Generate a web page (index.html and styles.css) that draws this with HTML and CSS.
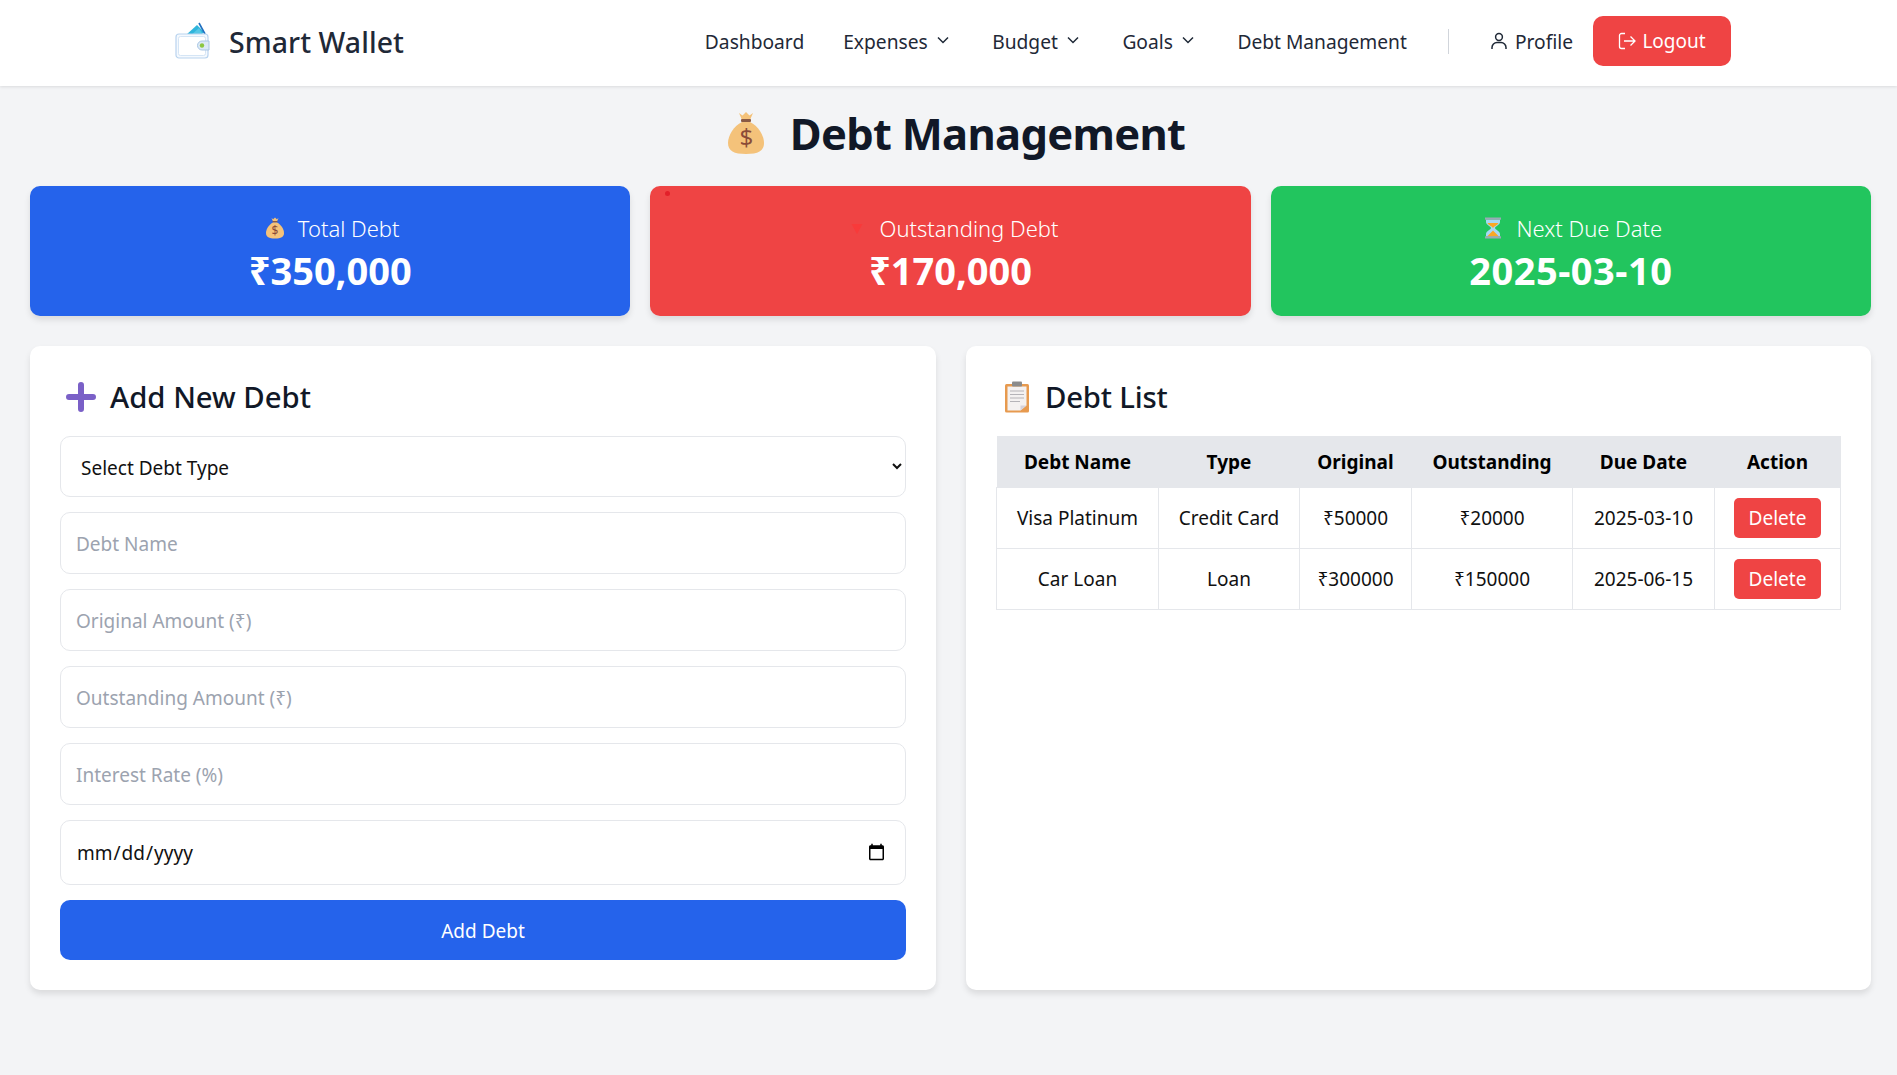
FILE: index.html
```html
<!DOCTYPE html>
<html lang="en">
<head>
<meta charset="utf-8">
<title>Smart Wallet - Debt Management</title>
<link rel="stylesheet" href="styles.css">
</head>
<body>
<nav class="navbar">
  <a class="brand" href="#">
    <svg class="brand-icon" viewBox="0 0 36 38">
      <path d="M11 13 L22 3 L29 10 L24 15Z" fill="#2fb5dc"/>
      <path d="M15 14 L24 6 L28 13Z" fill="#57c7e6"/>
      <path d="M24 1 L30 12" stroke="#1f6fc0" stroke-width="1.6"/>
      <rect x="1" y="12" width="32" height="24" rx="3" fill="#f4f9fe" stroke="#b9d3ee" stroke-width="1.2"/>
      <rect x="3.5" y="14.5" width="27" height="19" rx="2" fill="#fff" stroke="#d5e5f5" stroke-width="1"/>
      <path d="M34 19h-7a4.5 4.5 0 0 0 0 9h7z" fill="#dce9f6" stroke="#a9c6e4" stroke-width="1"/>
      <circle cx="27" cy="23.500" r="2.200" fill="#8cc63f"/>
    </svg>
    <span class="brand-name">Smart Wallet</span>
  </a>
  <div class="nav-links">
    <a class="nav-link nav-first" href="#">Dashboard</a>
    <a class="nav-link" href="#">Expenses<svg class="chev" viewBox="0 0 14 8"><path d="M2 1.500 7 6.500 12 1.500"/></svg></a>
    <a class="nav-link" href="#">Budget<svg class="chev" viewBox="0 0 14 8"><path d="M2 1.500 7 6.500 12 1.500"/></svg></a>
    <a class="nav-link" href="#">Goals<svg class="chev" viewBox="0 0 14 8"><path d="M2 1.500 7 6.500 12 1.500"/></svg></a>
    <a class="nav-link nav-last" href="#">Debt Management</a>
    <span class="nav-divider"></span>
    <a class="nav-link profile" href="#"><svg class="user-icon" viewBox="0 0 16 18"><circle cx="8" cy="5" r="3.400"/><path d="M1 17v-1.500a5 5 0 0 1 5-5h4a5 5 0 0 1 5 5V17"/></svg>Profile</a>
    <a class="logout" href="#"><svg class="logout-icon" viewBox="0 0 18 18"><path d="M7 1.500H3.500a2 2 0 0 0-2 2v11a2 2 0 0 0 2 2H7"/><path d="M6 9h11M12.500 4.500 17 9l-4.500 4.500"/></svg>Logout</a>
  </div>
</nav>

<main class="page">
  <h1 class="page-title">
    <svg class="title-bag" viewBox="0 0 38 44"><use href="#bag"/></svg>
    <span>Debt Management</span>
  </h1>

  <section class="stats">
    <div class="stat stat-blue">
      <div class="stat-label"><svg class="stat-icon" viewBox="0 0 38 44"><use href="#bag"/></svg>Total Debt</div>
      <div class="stat-value">₹350,000</div>
    </div>
    <div class="stat stat-red">
      <span class="red-dot"></span>
      <div class="stat-label"><svg class="stat-icon" viewBox="0 0 20 22"><path d="M4.500 7h11L10 17z" fill="#f83a3a"/></svg>Outstanding Debt</div>
      <div class="stat-value">₹170,000</div>
    </div>
    <div class="stat stat-green">
      <div class="stat-label"><svg class="stat-icon" viewBox="0 0 20 22">
        <path d="M3 2.500h14v2.500c0 3-5 4.500-5 6s5 3 5 6v2.500H3V17c0-3 5-4.500 5-6S3 8 3 5z" fill="#a6d8f5"/>
        <path d="M4.500 6h11c-.8 2-4.800 3.500-5.500 5-.7-1.500-4.700-3-5.500-5zM10 13.500l6 6H4z" fill="#f9a825"/>
        <rect x="2" y="0.500" width="16" height="2.200" fill="#9aa9b5"/><rect x="2" y="19.300" width="16" height="2.200" fill="#9aa9b5"/>
      </svg>Next Due Date</div>
      <div class="stat-value date-value">2025-03-10</div>
    </div>
  </section>

  <section class="panels">
    <div class="panel">
      <h2 class="panel-title"><svg class="plus-icon" viewBox="0 0 30 30"><path d="M15 3v24M3 15h24"/></svg>Add New Debt</h2>
      <form class="debt-form">
        <select class="field select-field"><option>Select Debt Type</option></select>
        <input class="field" type="text" placeholder="Debt Name">
        <input class="field" type="text" placeholder="Original Amount (₹)">
        <input class="field" type="text" placeholder="Outstanding Amount (₹)">
        <input class="field" type="text" placeholder="Interest Rate (%)">
        <input class="field date-field" type="date">
        <button class="submit" type="button">Add Debt</button>
      </form>
    </div>
    <div class="panel">
      <h2 class="panel-title list-title"><svg class="clip-icon" viewBox="0 0 26 32">
        <rect x="1" y="3" width="24" height="28.500" rx="1.500" fill="#e79a4f"/>
        <path d="M3.500 5.500h19v19l-6 5h-13z" fill="#f4f1f1"/>
        <path d="M16.500 29.500v-5h6z" fill="#d5d1da"/>
        <rect x="8" y="0.500" width="10" height="5" rx="1" fill="#8b8b8b"/>
        <path d="M6 10h14M6 13.500h14M6 17h14M6 20.500h10" stroke="#b5b3b8" stroke-width="1.200"/>
      </svg>Debt List</h2>
      <table class="debt-table">
        <colgroup><col class="c1"><col class="c2"><col class="c3"><col class="c4"><col class="c5"><col class="c6"></colgroup>
        <thead><tr><th>Debt Name</th><th>Type</th><th>Original</th><th>Outstanding</th><th>Due Date</th><th>Action</th></tr></thead>
        <tbody>
          <tr><td>Visa Platinum</td><td>Credit Card</td><td>₹50000</td><td>₹20000</td><td>2025-03-10</td><td><button class="del" type="button">Delete</button></td></tr>
          <tr><td>Car Loan</td><td>Loan</td><td>₹300000</td><td>₹150000</td><td>2025-06-15</td><td><button class="del" type="button">Delete</button></td></tr>
        </tbody>
      </table>
    </div>
  </section>
</main>

<svg class="defs" aria-hidden="true"><defs>
  <g id="bag">
    <path d="M12 2l3.500 2.500L19 1l3.500 3.500L26 2l-3 7H15z" fill="#f4c27a"/>
    <rect x="14" y="8" width="10" height="3" rx="1" fill="#8a5a44"/>
    <path d="M15 11h8c8 4 14 13 14 21 0 8-6 11-18 11S1 40 1 32c0-8 6-17 14-21z" fill="#f4c27a"/>
    <text x="19" y="35" text-anchor="middle" class="bag-sign">$</text>
  </g>
</defs></svg>
</body>
</html>
```
FILE: styles.css
```css
* { box-sizing: border-box; }
html, body { margin: 0; padding: 0; }
body {
  background: #f3f4f6;
  font-family: "Noto Sans", "Open Sans", sans-serif;
  color: #111827;
  min-height: 1075px;
}
a { text-decoration: none; color: inherit; }
.defs { display: none; }
.bag-sign { font: 400 24px "Noto Sans", sans-serif; fill: #8a4b38; }

.navbar {
  height: 86px;
  background: #fff;
  box-shadow: 0 1px 3px rgba(0,0,0,.1);
  display: flex;
  align-items: center;
  padding: 0 166px 4px 175px;
}
.brand { display: flex; align-items: center; gap: 18px; }
.brand-icon { width: 36px; height: 38px; }
.brand-name { font-size: 28.4px; font-weight: 500; color: #1f2937; letter-spacing: .1px; margin-top: 2px; }
.nav-links { margin-left: auto; display: flex; align-items: center; }
.nav-link { display: flex; align-items: center; font-size: 19.2px; color: #1f2937; margin-right: 42.5px; white-space: nowrap; }
.nav-first { margin-right: 39px; }
.nav-last { margin-right: 41px; }
.chev { width: 14px; height: 8px; margin-left: 8px; margin-top: -2px; fill: none; stroke: #1f2937; stroke-width: 1.500; }
.nav-divider { width: 1px; height: 25px; background: #d1d5db; margin-right: 42px; }
.nav-link.profile { margin-right: 20px; }
.user-icon { width: 16px; height: 18px; margin-right: 8px; fill: none; stroke: #1f2937; stroke-width: 1.500; }
.logout {
  width: 138px; height: 50px;
  background: #ef4444; color: #fff;
  border-radius: 10px;
  display: flex; align-items: center; justify-content: center;
  font-size: 19px;
}
.logout-icon { width: 18px; height: 18px; margin-right: 6px; fill: none; stroke: #fff; stroke-width: 1.300; }

.page { padding: 0 26px 0 30px; }
.page-title {
  margin: 0 0 6px; height: 94px;
  display: flex; align-items: center; justify-content: center;
  gap: 25px;
  padding-left: 9px;
  font-size: 43.5px; font-weight: 700; color: #111827;
  letter-spacing: -.7px;
}
.title-bag { width: 38px; height: 44px; margin-left: 2px; }

.stats { display: grid; grid-template-columns: repeat(3, 1fr); gap: 20px; }
.stat {
  position: relative;
  height: 130px;
  border-radius: 10px;
  color: #fff;
  text-align: center;
  box-shadow: 0 4px 6px rgba(0,0,0,.1);
  padding-top: 27px;
}
.stat-blue { background: #2563eb; }
.stat-red { background: #ef4444; }
.stat-green { background: #22c55e; }
.red-dot { position: absolute; left: 15px; top: 5px; width: 5px; height: 5px; border-radius: 50%; background: #e3202a; }
.stat-label { display: flex; align-items: center; justify-content: center; padding-left: 4px; font-size: 22px; line-height: 30px; font-weight: 300; }
.stat-icon { width: 20px; height: 22px; margin-right: 13px; }
.stat-value { font-size: 38px; font-weight: 700; line-height: 54px; }
.date-value { letter-spacing: .5px; }

.panels { display: grid; grid-template-columns: 906px 905px; gap: 30px; margin-top: 30px; }
.panel {
  height: 644px;
  background: #fff;
  border-radius: 10px;
  box-shadow: 0 4px 6px rgba(0,0,0,.1);
  padding: 30px;
}
.panel-title {
  margin: 0 0 18px;
  height: 42px;
  display: flex; align-items: center;
  font-size: 29.3px; font-weight: 500; color: #111827;
}
.list-title { letter-spacing: -.2px; }
.plus-icon { width: 30px; height: 30px; margin: 0 14px 0 6px; fill: none; stroke: #7a60c7; stroke-width: 6; stroke-linecap: round; }
.clip-icon { width: 26px; height: 32px; margin: 0 15px 0 8px; }

.debt-form { display: flex; flex-direction: column; gap: 15px; }
.field {
  width: 100%; height: 62px;
  background: #fff;
  border: 1px solid #e5e7eb;
  border-radius: 10px;
  padding: 2px 15px 0;
  font: 400 19px "Noto Sans", sans-serif;
  color: #111;
}
.field::placeholder { color: #9ca3af; }
.select-field { height: 61px; padding-left: 16px; }
.date-field { height: 65px; padding: 0 17px 0 15px; }
.submit {
  height: 60px;
  padding-top: 2px;
  background: #2563eb; color: #fff;
  border: 0; border-radius: 10px;
  font: 400 19px "Noto Sans", sans-serif;
}

.debt-table { width: 844px; table-layout: fixed; border-collapse: collapse; font-size: 19px; }
.c1 { width: 162px; } .c2 { width: 141px; } .c3 { width: 112px; }
.c4 { width: 161px; } .c5 { width: 142px; } .c6 { width: 126px; }
.debt-table th {
  height: 51px; padding-top: 3px; background: #e5e7eb; font-weight: 700; color: #000;
}
.debt-table td {
  height: 61px; text-align: center; color: #111;
  border: 1px solid #e5e7eb;
}
.del {
  width: 87px; height: 40px;
  background: #ef4444; color: #fff;
  border: 0; border-radius: 5px;
  font: 400 19px "Noto Sans", sans-serif;
}
```
